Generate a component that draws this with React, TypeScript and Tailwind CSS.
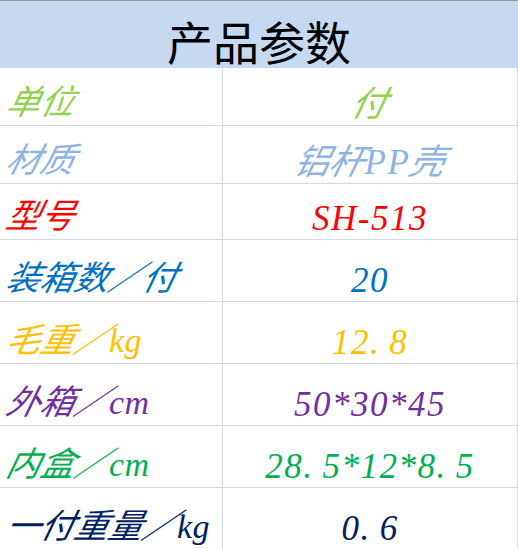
import React from "react";

type Row = { label: string; value: string; color: string; h: string };

const ROWS: Row[] = [
  { label: "单位", value: "付", color: "text-[#92d050]", h: "h-[58px]" },
  { label: "材质", value: "铝杆PP壳", color: "text-[#8eb4e3]", h: "h-[58px]" },
  { label: "型号", value: "SH-513", color: "text-[#ff0000]", h: "h-[56px]" },
  { label: "装箱数／付", value: "20", color: "text-[#0070c0]", h: "h-[62px]" },
  { label: "毛重／kg", value: "12.8", color: "text-[#ffc000]", h: "h-[62px]" },
  { label: "外箱／cm", value: "50*30*45", color: "text-[#7030a0]", h: "h-[62px]" },
  { label: "内盒／cm", value: "28.5*12*8.5", color: "text-[#00b050]", h: "h-[62px]" },
  { label: "一付重量／kg", value: "0.6", color: "text-[#002060]", h: "h-[62px]" },
];

// CJK font has no italic, so slant those runs by hand; half-width dot keeps "12. 8" gap
function Slanted({ text }: { text: string }) {
  return (
    <>
      {text.split(/([\u3000-\u9fff\uff00-\uffef]+|\.)/).map((part, i) => {
        if (!part) return null;
        if (part === ".") return <span key={i} className="inline-block w-[0.55em]">.</span>;
        if (/[\u3000-\u9fff\uff00-\uffef]/.test(part))
          return (
            <span key={i} className="inline-block -skew-x-[13deg] tracking-normal">
              {part}
            </span>
          );
        return <span key={i}>{part}</span>;
      })}
    </>
  );
}

export default function App() {
  return (
    <div className="w-[518px] h-[549px] overflow-hidden bg-white">
      <div className="h-[68px] bg-[#c5d9f1] border-t border-[#9a9a9a] flex items-end justify-center pb-[5px]">
        <span className="text-[46px] leading-none text-black font-['Noto_Sans_CJK_SC',sans-serif]">
          产品参数
        </span>
      </div>
      {ROWS.map((r) => (
        <div
          key={r.label}
          className={`grid grid-cols-[223px_295px] border-b border-[#d0d7e5] ${r.h} ${r.color}`}
        >
          <div className="border-r border-[#d0d7e5] flex items-end pl-[7px] pb-[5px] overflow-hidden">
            <span className="text-[34px] leading-none italic tracking-[0.5px] whitespace-nowrap font-['Liberation_Serif','Noto_Sans_CJK_SC',serif]">
              <Slanted text={r.label} />
            </span>
          </div>
          <div className="border-r border-[#d0d7e5] flex items-end justify-center pb-[3px] overflow-hidden">
            <span className="text-[35px] leading-none italic tracking-[1.5px] whitespace-nowrap font-['Liberation_Serif','Noto_Sans_CJK_SC',serif]">
              <Slanted text={r.value} />
            </span>
          </div>
        </div>
      ))}
    </div>
  );
}
